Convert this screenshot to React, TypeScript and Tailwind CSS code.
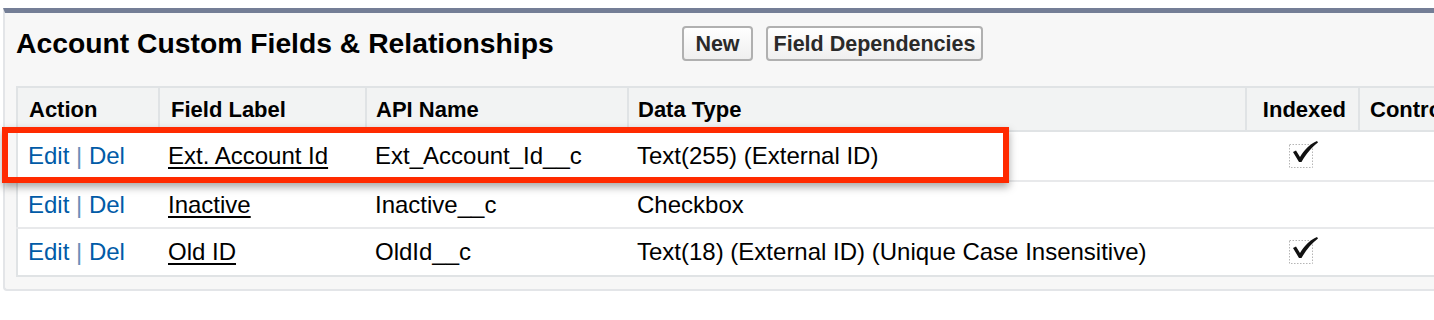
import React from "react";

const rows = [
  { label: "Ext. Account Id", api: "Ext_Account_Id__c", type: "Text(255) (External ID)", indexed: true, h: "h-[50px]" },
  { label: "Inactive", api: "Inactive__c", type: "Checkbox", indexed: false, h: "h-[47px]" },
  { label: "Old ID", api: "OldId__c", type: "Text(18) (External ID) (Unique Case Insensitive)", indexed: true, h: "h-[48px]" },
];

function Check() {
  return (
    <svg width="32" height="30" viewBox="0 0 32 30" className="block">
      <rect x="0.5" y="3.5" width="23" height="23" fill="none" stroke="#b5b5b5" strokeDasharray="1.5 1.5" />
      <path d="M4 11 L7 9.5 L11 16 C15 9 21 3 28 0 L29 1.5 C23 6 17 13 12.5 21 L10 21 Z" fill="#111" />
    </svg>
  );
}

export default function App() {
  return (
    <div className="relative h-[320px] w-[1434px] overflow-hidden bg-white font-['Liberation_Sans',Arial,sans-serif] text-black">
      <div className="pt-[8px] pl-[3px]">
        {/* Panel */}
        <div className="w-[1500px] rounded-bl-[4px] border-t-[5px] border-l-2 border-b-2 border-t-[#747e96] border-l-[#e3e5e8] border-b-[#e3e5e8] bg-[#f7f7f7] pb-[12px] pl-[11px]">
          <div className="flex items-center pt-[13px] pb-[25px]">
            <h2 className="w-[666px] whitespace-nowrap text-[28.3px] font-bold leading-[35px]">
              Account Custom Fields &amp; Relationships
            </h2>
            <div className="flex gap-[13px]">
              <button className="h-[35px] w-[71px] rounded-[4px] border-2 border-[#b0b0b0] bg-gradient-to-b from-white to-[#efefef] text-[21.5px] font-bold text-[#2a2a2a]">
                New
              </button>
              <button className="h-[35px] w-[217px] whitespace-nowrap rounded-[4px] border-2 border-[#b0b0b0] bg-gradient-to-b from-white to-[#efefef] text-[21.5px] font-bold text-[#2a2a2a]">
                Field Dependencies
              </button>
            </div>
          </div>

          {/* Table */}
          <table className="w-[1500px] table-fixed border-collapse border-2 border-[#e0e3e5] bg-white text-[24px]">
            <colgroup>
              <col className="w-[142px]" />
              <col className="w-[207px]" />
              <col className="w-[262px]" />
              <col className="w-[618px]" />
              <col className="w-[113px]" />
              <col />
            </colgroup>
            <thead>
              <tr className="h-[44px] bg-[#f2f3f3] text-left text-[22px]">
                <th className="border-b-2 border-r-2 border-[#e0e3e5] pl-[11px] font-bold">Action</th>
                <th className="border-b-2 border-r-2 border-[#e0e3e5] pl-[11px] font-bold">Field Label</th>
                <th className="border-b-2 border-r-2 border-[#e0e3e5] pl-[9px] font-bold">API Name</th>
                <th className="border-b-2 border-r-2 border-[#e0e3e5] pl-[9px] font-bold">Data Type</th>
                <th className="border-b-2 border-r-2 border-[#e0e3e5] pr-[12px] text-right font-bold">Indexed</th>
                <th className="whitespace-nowrap border-b-2 border-[#e0e3e5] pl-[10px] font-bold">Controlling Field</th>
              </tr>
            </thead>
            <tbody>
              {rows.map((r) => (
                <tr key={r.api} className={`${r.h} border-b-2 border-[#e8e9eb] last:border-b-0`}>
                  <td className="pl-[10px] whitespace-nowrap text-[#015ba7]">
                    Edit <span className="text-[#6a8fb8]">|</span> Del
                  </td>
                  <td className="pl-[9px] whitespace-nowrap">
                    <span className="underline decoration-2 underline-offset-[3px]">{r.label}</span>
                  </td>
                  <td className="pl-[9px] whitespace-nowrap">{r.api}</td>
                  <td className="pl-[9px] whitespace-nowrap">{r.type}</td>
                  <td className="pl-[43px]">{r.indexed && <Check />}</td>
                  <td></td>
                </tr>
              ))}
            </tbody>
          </table>
        </div>
      </div>

      {/* Highlight overlay */}
      <div className="absolute left-[2px] top-[127px] h-[56px] w-[1007px] border-[6px] border-[#ff2a00] shadow-[0_4px_8px_rgba(0,0,0,0.35)]" />
    </div>
  );
}
